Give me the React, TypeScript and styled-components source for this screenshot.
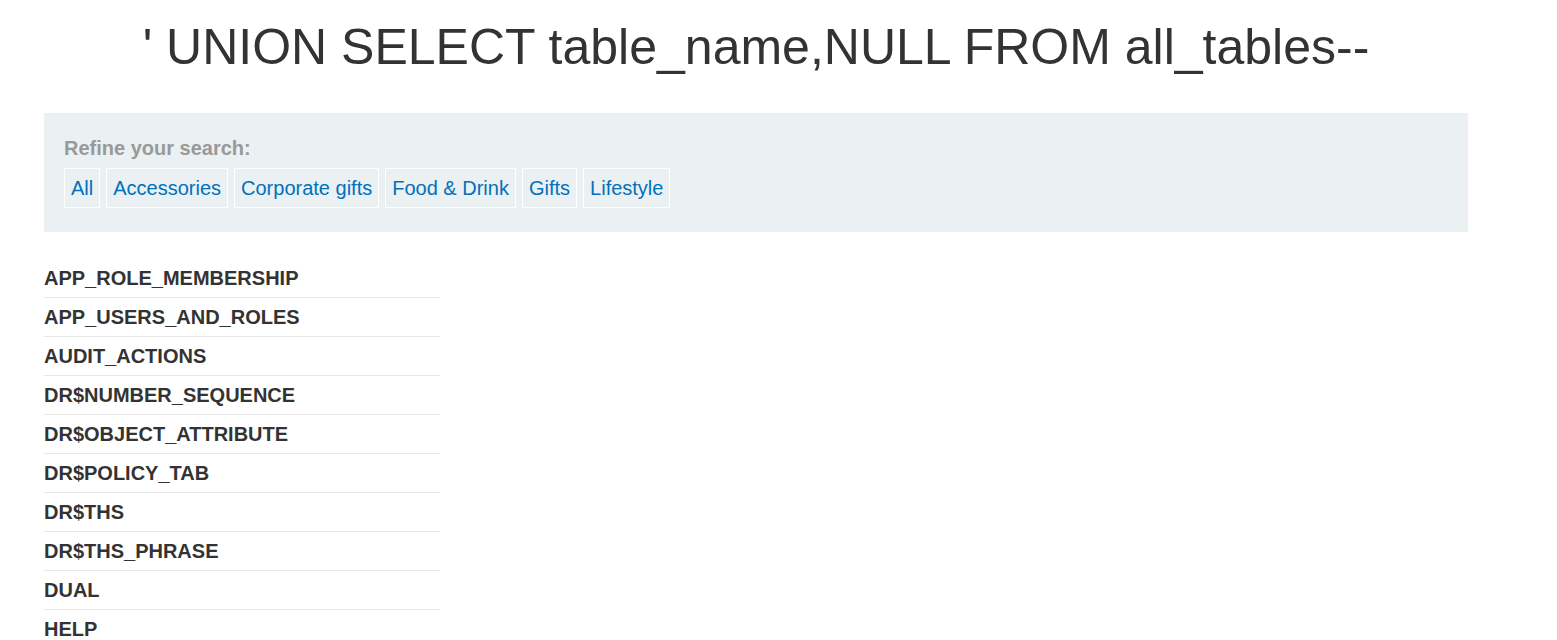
import React from "react";
import styled, { createGlobalStyle } from "styled-components";

const Global = createGlobalStyle`
  html, body { margin: 0; padding: 0; background: #fff; }
  body { font-family: "Liberation Sans", Arial, sans-serif; color: #333; }
`;

const Container = styled.div`
  width: 1424px;
  margin-left: 44px;
`;

const Title = styled.h1`
  margin: 0;
  padding-top: 14px;
  height: 113px;
  box-sizing: border-box;
  text-align: center;
  font-size: 50px;
  font-weight: 400;
  line-height: 66px;
  color: #333;
`;

const FilterPanel = styled.section`
  background: #ebf0f2;
  padding: 22px 20px 23px;
  height: 119px;
  box-sizing: border-box;
`;

const Label = styled.div`
  font-size: 20px;
  font-weight: 700;
  color: #999;
  line-height: 26px;
  margin-bottom: 7px;
`;

const Filters = styled.div`
  display: flex;
  gap: 6px;
`;

const FilterLink = styled.a`
  display: block;
  border: 1px solid #fff;
  padding: 0 6px;
  height: 40px;
  box-sizing: border-box;
  line-height: 38px;
  font-size: 20px;
  color: #0071bc;
  text-decoration: none;
`;

const List = styled.div`
  margin-top: 27px;
  width: 396px;
`;

const Row = styled.div`
  height: 39px;
  box-sizing: border-box;
  border-bottom: 1px solid #e6e6e6;
  display: flex;
  align-items: center;
  font-size: 20px;
  font-weight: 700;
  color: #333;
`;

const filters = ["All", "Accessories", "Corporate gifts", "Food & Drink", "Gifts", "Lifestyle"];
const tables = [
  "APP_ROLE_MEMBERSHIP",
  "APP_USERS_AND_ROLES",
  "AUDIT_ACTIONS",
  "DR$NUMBER_SEQUENCE",
  "DR$OBJECT_ATTRIBUTE",
  "DR$POLICY_TAB",
  "DR$THS",
  "DR$THS_PHRASE",
  "DUAL",
  "HELP",
];

export default function App() {
  return (
    <>
      <Global />
      <Container>
        <Title>' UNION SELECT table_name,NULL FROM all_tables--</Title>
        <FilterPanel>
          <Label>Refine your search:</Label>
          <Filters>
            {filters.map((f) => (
              <FilterLink key={f} href="#">{f}</FilterLink>
            ))}
          </Filters>
        </FilterPanel>
        <List>
          {tables.map((t) => (
            <Row key={t}>{t}</Row>
          ))}
        </List>
      </Container>
    </>
  );
}
